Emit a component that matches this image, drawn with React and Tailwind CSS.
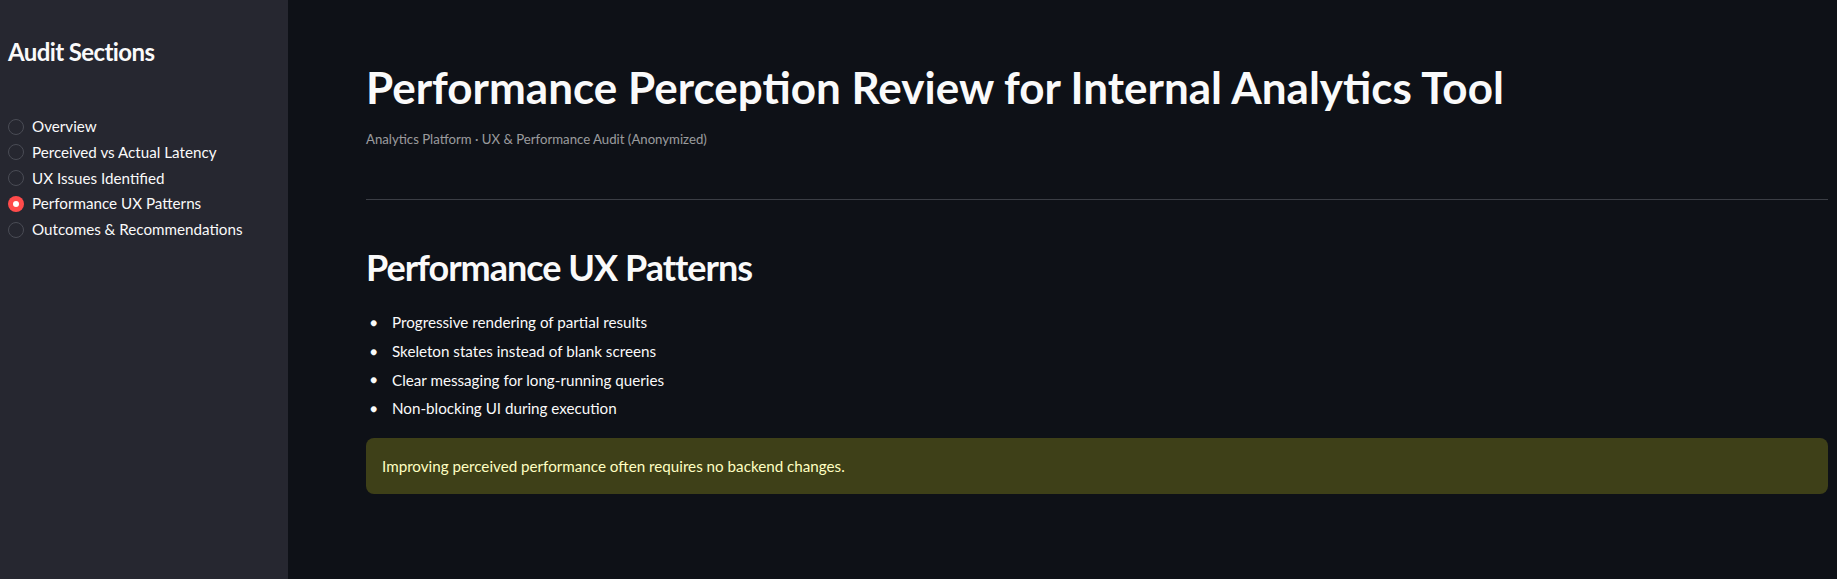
import React from "react";

const sections = [
  "Overview",
  "Perceived vs Actual Latency",
  "UX Issues Identified",
  "Performance UX Patterns",
  "Outcomes & Recommendations",
];

const bullets = [
  "Progressive rendering of partial results",
  "Skeleton states instead of blank screens",
  "Clear messaging for long-running queries",
  "Non-blocking UI during execution",
];

export default function App() {
  const font = { fontFamily: "Lato, 'Noto Sans', sans-serif" };
  return (
    <div className="flex min-h-screen w-full bg-[#0e1117] text-[#fafafa]" style={font}>
      <aside className="w-[288px] shrink-0 bg-[#262730] px-2 pt-[38px]">
        <h3 className="text-[24px] font-bold leading-[1.2] tracking-[-0.6px] text-[#fafafa]">Audit Sections</h3>
        <div className="mt-[47px] flex flex-col">
          {sections.map((s, i) => {
            const active = i === 3;
            return (
              <div key={s} className="flex h-[25.8px] items-center gap-2">
                {active ? (
                  <span className="flex h-4 w-4 items-center justify-center rounded-full bg-[#ff4b4b]">
                    <span className="h-[6px] w-[6px] rounded-full bg-white" />
                  </span>
                ) : (
                  <span className="h-4 w-4 rounded-full border border-[#4a4c55] bg-[#262730]" />
                )}
                <span className="text-[15.2px] leading-none text-[#fafafa]">{s}</span>
              </div>
            );
          })}
        </div>
      </aside>
      <main className="flex-1 pl-[78px] pr-[9px] pt-[61px]">
        <h1 className="text-[44px] font-bold leading-[1.2] text-[#fafafa]">
          Performance Perception Review for Internal Analytics Tool
        </h1>
        <p className="mt-[16px] text-[13.2px] leading-[1.4] text-[#fafafa99]">
          Analytics Platform · UX &amp; Performance Audit (Anonymized)
        </p>
        <div className="mt-[51px] h-px bg-[#3b3e45]" />
        <h2 className="mt-[46px] text-[36px] font-bold leading-[1.2] tracking-[-1px] text-[#fafafa]">
          Performance UX Patterns
        </h2>
        <ul className="mt-[19px] flex flex-col">
          {bullets.map((b) => (
            <li key={b} className="flex h-[28.7px] items-center text-[15.2px] text-[#fafafa]">
              <span className="w-[26px] pl-[4px] text-[12px]">●</span>
              <span>{b}</span>
            </li>
          ))}
        </ul>
        <div className="mt-[15px] flex h-[56px] items-center rounded-lg bg-[#3e4018] px-[16px] text-[15.2px] text-[#ffffc2]">
          Improving perceived performance often requires no backend changes.
        </div>
      </main>
    </div>
  );
}
